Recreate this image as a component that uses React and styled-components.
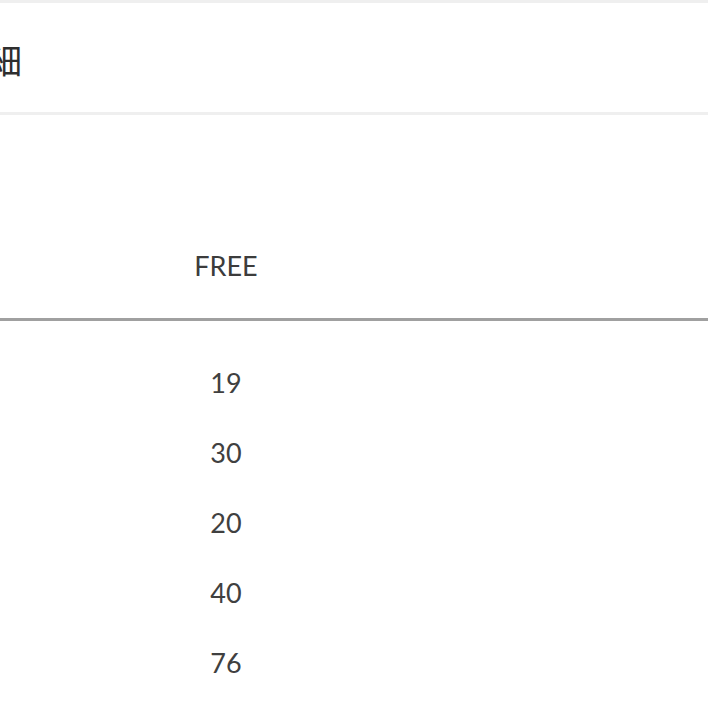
import React from 'react';
import styled, { createGlobalStyle } from 'styled-components';

const GlobalStyle = createGlobalStyle`
  html, body {
    margin: 0;
    padding: 0;
    background: #ffffff;
    overflow: hidden;
  }
  body {
    font-family: Lato, "Noto Sans", "Noto Sans CJK JP", sans-serif;
    color: #3c3c3c;
  }
`;

const Page = styled.div`
  width: 708px;
  height: 708px;
  overflow: hidden;
  border-top: 3px solid #efefef;
  box-sizing: border-box;
`;

const TitleBar = styled.div`
  height: 109px;
  display: flex;
  align-items: center;
  overflow: hidden;
  border-bottom: 3px solid #efefef;
`;

const Title = styled.h2`
  margin: 2px 0 0 -13px;
  font-family: "Noto Sans CJK JP", sans-serif;
  font-weight: 400;
  font-size: 35px;
  color: #2e2e2e;
  white-space: nowrap;
`;

const Table = styled.div`
  display: grid;
  grid-template-columns: 146px 160px 1fr;
`;

const HeadCell = styled.div`
  height: 206px;
  box-sizing: border-box;
  display: flex;
  align-items: flex-end;
  justify-content: center;
  padding-bottom: 36px;
  font-size: 27px;
  line-height: 32px;
  border-bottom: 3px solid #a0a0a0;
`;

const Body = styled.div`
  grid-column: 1 / -1;
  display: grid;
  grid-template-columns: 146px 160px 1fr;
  padding-top: 26px;
`;

const Cell = styled.div`
  height: 70px;
  display: flex;
  align-items: center;
  justify-content: center;
  font-size: 27px;
  color: #404040;
`;

const rows = [
  ['着丈', '19'],
  ['身幅', '30'],
  ['肩幅', '20'],
  ['袖丈', '40'],
  ['総丈', '76'],
];

export default function App() {
  return (
    <>
      <GlobalStyle />
      <Page>
        <TitleBar>
          <Title>細</Title>
        </TitleBar>
        <Table>
          <HeadCell />
          <HeadCell>FREE</HeadCell>
          <HeadCell />
          <Body>
            {rows.map(([label, value]) => (
              <React.Fragment key={label}>
                <Cell />
                <Cell>{value}</Cell>
                <Cell />
              </React.Fragment>
            ))}
          </Body>
        </Table>
      </Page>
    </>
  );
}
